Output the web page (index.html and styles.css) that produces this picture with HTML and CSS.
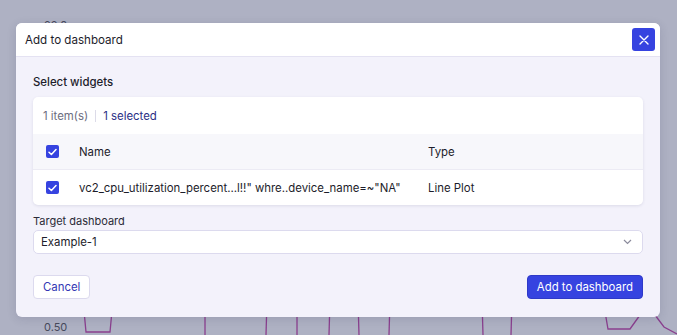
FILE: index.html
```html
<!DOCTYPE html>
<html lang="en">
<head>
  <meta charset="UTF-8">
  <meta name="viewport" content="width=device-width, initial-scale=1.0">
  <title>Add to dashboard</title>
  <link rel="stylesheet" href="styles.css">
</head>
<body>
  <!-- chart behind the dialog, already dimmed -->
  <div class="chart">
    <span class="axis-label top">22.0</span>
    <span class="axis-label bottom">0.50</span>
    <svg class="series" width="677" height="335" viewBox="0 0 677 335">
      <polyline points="83,300 86,332 110,332 113,300" />
      <line x1="205" y1="300" x2="205" y2="335" />
      <line x1="267" y1="300" x2="266" y2="335" />
      <line x1="297" y1="300" x2="297" y2="335" />
      <line x1="330" y1="300" x2="329" y2="335" />
      <line x1="358" y1="300" x2="359" y2="335" />
      <line x1="390" y1="300" x2="389" y2="335" />
      <line x1="482" y1="300" x2="483" y2="335" />
      <line x1="512" y1="300" x2="511" y2="335" />
      <polyline points="603,300 608,329 630,329 640,315 655,315 664,327 677,334" />
    </svg>
  </div>

  <div class="overlay">
    <div class="modal">
      <div class="modal-header">
        <h2>Add to dashboard</h2>
        <button class="close-btn" aria-label="Close">
          <svg width="10" height="10" viewBox="0 0 10 10"><path d="M1 1L9 9M9 1L1 9" /></svg>
        </button>
      </div>

      <div class="modal-body">
        <h3>Select widgets</h3>

        <div class="card">
          <div class="toolbar">
            <span class="count">1 item(s)</span>
            <span class="divider"></span>
            <span class="selected">1 selected</span>
          </div>
          <div class="row head">
            <span class="check"><svg width="9" height="8" viewBox="0 0 9 8"><path d="M1 4.2L3.4 6.5L8 1.5" /></svg></span>
            <span class="col-name">Name</span>
            <span class="col-type">Type</span>
          </div>
          <div class="row">
            <span class="check"><svg width="9" height="8" viewBox="0 0 9 8"><path d="M1 4.2L3.4 6.5L8 1.5" /></svg></span>
            <span class="col-name">vc2_cpu_utilization_percent...l‼" whre..device_name=~"NA"</span>
            <span class="col-type">Line Plot</span>
          </div>
        </div>

        <label class="field-label">Target dashboard</label>
        <div class="select">
          <span>Example-1</span>
          <svg width="9" height="6" viewBox="0 0 9 6"><path d="M1 1L4.5 4.5L8 1" /></svg>
        </div>

        <div class="actions">
          <button class="btn secondary">Cancel</button>
          <button class="btn primary">Add to dashboard</button>
        </div>
      </div>
    </div>
  </div>
</body>
</html>
```

FILE: styles.css
```css
* {
  box-sizing: border-box;
}

body {
  margin: 0;
  width: 677px;
  height: 335px;
  overflow: hidden;
  font-family: Inter, "Noto Sans", sans-serif;
  background-color: #aeb1c3;
  position: relative;
}

.chart {
  position: absolute;
  inset: 0;
}

.axis-label {
  position: absolute;
  left: 44px;
  font-size: 11px;
  color: #474a5c;
}

.axis-label.top {
  top: 18px;
}

.axis-label.bottom {
  top: 320px;
}

.series {
  position: absolute;
  left: 0;
  top: 0;
}

.series polyline,
.series line {
  fill: none;
  stroke: #8a3f8e;
  stroke-width: 1.3;
}

.overlay {
  position: absolute;
  inset: 0;
  padding: 23px 17px 18px 16px;
}

.modal {
  height: 294px;
  border-radius: 6px;
  overflow: hidden;
  background-color: #f3f2fb;
  box-shadow: 0 2px 10px rgba(40, 40, 80, 0.15);
  display: flex;
  flex-direction: column;
}

.modal-header {
  height: 34px;
  background-color: #fff;
  border-bottom: 1px solid #e4e2f2;
  display: flex;
  align-items: center;
  justify-content: space-between;
  padding: 0 5px 0 9px;
}

.modal-header h2 {
  margin: 0;
  font-size: 11.6px;
  font-weight: 400;
  color: #1d1d2b;
}

.close-btn {
  width: 23px;
  height: 23px;
  padding: 0;
  border: none;
  border-radius: 3px;
  background-color: #3643e0;
  display: flex;
  align-items: center;
  justify-content: center;
}

.close-btn path {
  stroke: #fff;
  stroke-width: 1.4;
  stroke-linecap: round;
}

.modal-body {
  flex: 1;
  padding: 17px 17px 0 17px;
  display: flex;
  flex-direction: column;
}

.modal-body h3 {
  margin: 0 0 7px 0;
  font-size: 11.4px;
  font-weight: 500;
  color: #1d1d2b;
  line-height: 16px;
}

.card {
  background-color: #fff;
  border-radius: 5px;
  box-shadow: 0 1px 3px rgba(60, 60, 110, 0.12);
  overflow: hidden;
  font-size: 11.4px;
  color: #1d1d2b;
}

.toolbar {
  height: 37px;
  display: flex;
  align-items: center;
  padding-left: 10px;
  gap: 7px;
}

.toolbar .count {
  color: #6c6c80;
}

.toolbar .divider {
  width: 1px;
  height: 12px;
  background-color: #dcdbe8;
}

.toolbar .selected {
  color: #2b2f85;
}

.row {
  height: 35px;
  display: flex;
  align-items: center;
  padding-left: 13px;
}

.row.head {
  height: 36px;
  background-color: #f7f7fb;
  border-bottom: 1px solid #ecebf4;
}

.check {
  width: 13px;
  height: 13px;
  border-radius: 2px;
  background-color: #3643e0;
  display: flex;
  align-items: center;
  justify-content: center;
  margin-right: 20px;
}

.check path {
  fill: none;
  stroke: #fff;
  stroke-width: 1.5;
  stroke-linecap: round;
  stroke-linejoin: round;
}

.col-name {
  width: 349px;
  white-space: nowrap;
}

.field-label {
  margin-top: 9px;
  font-size: 11px;
  color: #2a2a38;
  line-height: 15px;
}

.select {
  margin-top: 1px;
  height: 24px;
  background-color: #fff;
  border: 1px solid #dcdaee;
  border-radius: 5px;
  display: flex;
  align-items: center;
  justify-content: space-between;
  padding: 0 10px 0 7px;
  font-size: 11.4px;
  color: #1d1d2b;
}

.select path {
  fill: none;
  stroke: #8b8b9c;
  stroke-width: 1.2;
}

.actions {
  margin-top: 21px;
  display: flex;
  justify-content: space-between;
}

.btn {
  height: 24px;
  border-radius: 4px;
  font-family: Inter, "Noto Sans", sans-serif;
  font-size: 11.4px;
  padding: 0 9px;
}

.btn.secondary {
  background-color: #fff;
  border: 1px solid #dcdaee;
  color: #3338b4;
}

.btn.primary {
  background-color: #3643e0;
  border: 1px solid #2e39c8;
  color: #fff;
}
```
